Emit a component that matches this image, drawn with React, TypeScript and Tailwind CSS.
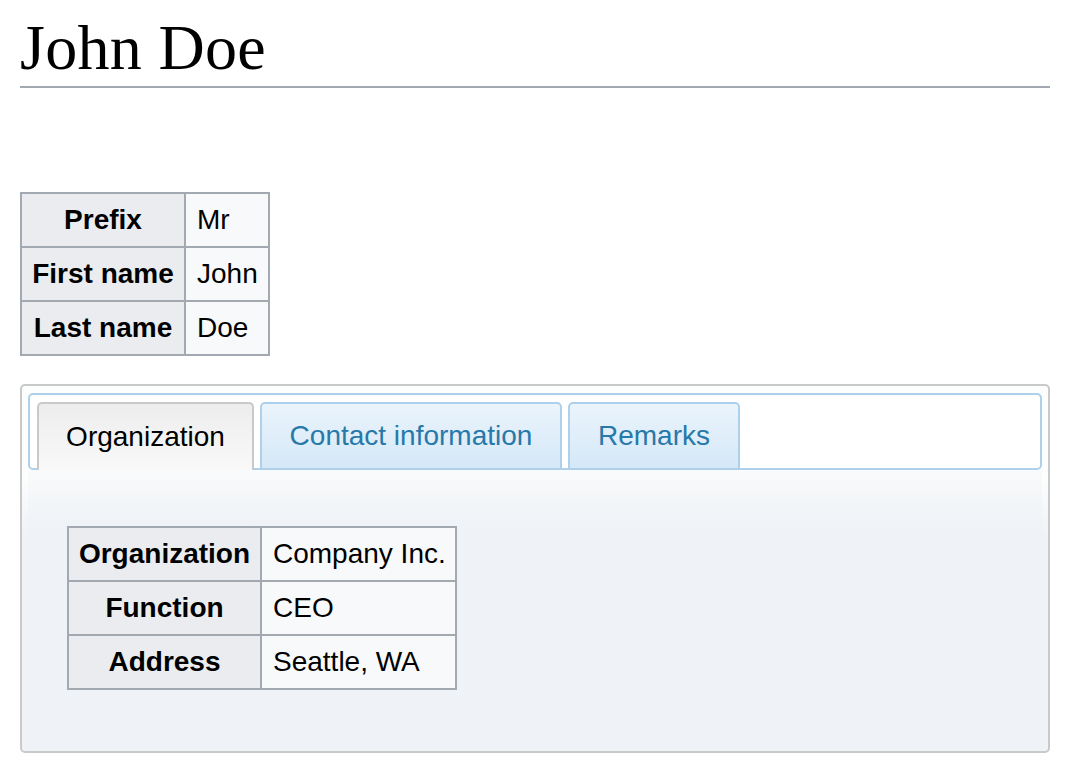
const sans = { fontFamily: '"Liberation Sans", Arial, Helvetica, sans-serif' };

type Row = { label: string; value: string };

function InfoTable({ rows, cols }: { rows: Row[]; cols: string }) {
  return (
    <div className={`inline-grid ${cols} gap-[2px] bg-[#a2a9b1] p-[2px] text-[28px] text-black`} style={sans}>
      {rows.map((r) => (
        <div key={r.label} className="contents">
          <div className="flex h-[52px] items-center justify-center bg-[#eaecf0] font-bold">{r.label}</div>
          <div className="flex h-[52px] items-center bg-[#f8f9fa] pl-[11px]">{r.value}</div>
        </div>
      ))}
    </div>
  );
}

const tabs = [
  { label: 'Organization', w: 'w-[217px]' },
  { label: 'Contact information', w: 'w-[302px]' },
  { label: 'Remarks', w: 'w-[172px]' },
];

export default function App() {
  const active = 0;

  return (
    <div className="min-h-screen w-full bg-white">
      <div className="ml-[20px] w-[1030px]">
        <h1
          className="border-b-2 border-[#a2a9b1] pt-[9px] text-[64px] font-normal leading-[77px] tracking-[0.3px] text-black"
          style={{ fontFamily: '"Liberation Serif", Georgia, "Times New Roman", serif' }}
        >
          John Doe
        </h1>

        <div className="mt-[104px]">
          <InfoTable
            cols="grid-cols-[162px_82px]"
            rows={[
              { label: 'Prefix', value: 'Mr' },
              { label: 'First name', value: 'John' },
              { label: 'Last name', value: 'Doe' },
            ]}
          />
        </div>

        <div className="mt-[28px] rounded-[5px] border-2 border-[#c9c9c9] bg-[linear-gradient(to_bottom,#fcfdfd_0px,#fcfdfd_92px,#eff3f7_150px,#eff3f7_100%)] px-[6px] pb-[6px] pt-[7px]">
          {/* tab strip */}
          <div className="flex h-[77px] items-end gap-[6px] rounded-[5px] border-2 border-[#aed0ea] bg-white px-[7px]">
            {tabs.map((t, i) =>
              i === active ? (
                <div
                  key={t.label}
                  className={`relative z-10 -mb-[2px] flex h-[68px] ${t.w} items-center justify-center rounded-t-[5px] border-2 border-b-0 border-[#c9c9c9] bg-[linear-gradient(to_bottom,#ededed,#f9f9f9)] text-[28px] text-black`}
                  style={sans}
                >
                  {t.label}
                </div>
              ) : (
                <div
                  key={t.label}
                  className={`-mb-[2px] flex h-[68px] ${t.w} items-center justify-center rounded-t-[5px] border-2 border-[#aed0ea] bg-[linear-gradient(to_bottom,#eaf4fc,#d5e8f7)] text-[28px] text-[#2779aa]`}
                  style={sans}
                >
                  {t.label}
                </div>
              )
            )}
          </div>

          {/* panel */}
          <div className="bg-[linear-gradient(to_bottom,#f9fafb,#eff3f7_55px)] pb-[55px] pl-[39px] pt-[56px]">
            <InfoTable
              cols="grid-cols-[191px_193px]"
              rows={[
                { label: 'Organization', value: 'Company Inc.' },
                { label: 'Function', value: 'CEO' },
                { label: 'Address', value: 'Seattle, WA' },
              ]}
            />
          </div>
        </div>
      </div>
    </div>
  );
}
